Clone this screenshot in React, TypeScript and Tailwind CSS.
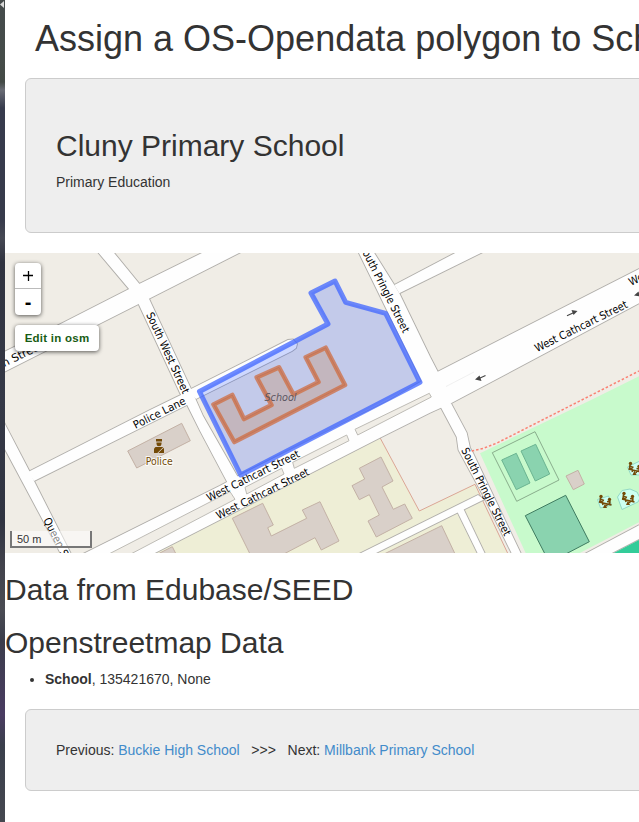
import React from 'react';

const ROADS = [
  '0,354 60,324.3 134,286.5 206,251 243,251 149,298.7 0,374',
  '97,251 112.5,251 139.3,283.7 149,298.7 190.7,388.3 203,416 236,474 247,492 235,497 227,481.7 200,430.7 186.7,404 180,393 138.3,303.3 129.3,289.3',
  '28,472 150,410 186,392.5 192,402.5 34,481',
  '188,390.5 288,340 293,339.5 297,344 296,348 292,351 196,399',
  '0,414 5,424.3 29.3,471 34,481 72,556 62,556 5,449.3 0,440',
  '79,556 220,485.7 240,475 390,400 437.7,371.7 645,266 645,300 451,403.3 430,412.7 380,437.7 200,530 149,556',
  '358,251 373,251 394.3,285 399.3,293.3 430,356.7 440,376 425,388',
  '394.3,285 459,251 485,251 399.3,293.3',
  '437,400 451,403.3 466.7,432.7 470,448 473,453 522,556 513,556 484,497 458.5,450 456.7,437',
  '355,556 478,495 484,499.5 370,556',
  '457,511 463,508 486,556 479,556',
  '581,556 645,522 645,536 606,556',
];

const ISLANDS = [
  '230,491.7 235,499.3 127,556 105,556',
  '245,487.3 281.7,468.3 284,474 246.7,494',
  '292.7,462.3 346.7,435 349,440.7 294.3,468.3',
  '355,429.3 429.3,393.3 431.3,397 357.7,435',
];

const BUILDINGS = [
  '127.7,451 181.7,423.3 190.3,440.7 136.7,468',
  '232.3,518.3 262.7,503.3 273.3,525 267.7,527.7 271.3,536 306.7,518.3 302.3,510 320,501.7 339,541 321.3,550 315,537.7 280,556 251,556',
  '359.3,468.3 381,457 393,481 382,487 393.3,509.3 404.7,504 412.3,518.3 376.3,537 368,521 379.3,515 369.3,494.7 359.3,499.7 352,485.7 364.7,479',
  '380,556 441.7,525.7 456,556',
  '154,556 172.3,546.7 177,556',
  '566,476 578,470.3 584.3,484 573.3,489.7',
];

const SITE = '311,293 335,281 345.7,302.3 385.7,313.3 420,382.3 240.7,475 199.5,391.5 328,324';
const SCHOOL =
  '213.5,404.5 232.3,395 244,419 271.5,405 256.7,377.3 279,367.3 293.5,394.5 318.5,382 305.7,357.3 325.7,347.7 345,385 234.3,442';

type LabelProps = { x: number; y: number; angle: number; length?: number; children: string };

function StreetLabel({ x, y, angle, length, children }: LabelProps) {
  return (
    <text
      transform={`translate(${x} ${y}) rotate(${angle})`}
      textLength={length}
      lengthAdjust="spacingAndGlyphs"
      className="fill-black stroke-white/60 stroke-1 text-[11px] [paint-order:stroke]"
    >
      {children}
    </text>
  );
}

function Seesaw({ x, y }: { x: number; y: number }) {
  return (
    <g transform={`translate(${x} ${y})`} fill="#734a08">
      <circle cx="-4" cy="-4.5" r="1.7" />
      <circle cx="4.5" cy="-1.5" r="1.7" />
      <path
        d="M-4.5 -3 -5 0.5 -2.5 1 -2 4M4.8 0 4.8 3 2.2 3 1.5 5M-6 1 6.5 4M-4 -1.5 -1 -0.5M4.5 1 2 0.5"
        fill="none"
        stroke="#734a08"
        strokeWidth="1.6"
      />
      <path d="M-2 7 0 2.5 2 7Z" />
    </g>
  );
}

function StreetMap() {
  return (
    <svg
      viewBox="5 253 634 300"
      className="block h-[300px] w-[634px] bg-[#f0ede6] font-['DejaVu_Sans',sans-serif]"
    >
      <polygon points="149,556 200,530 380,437.7 419.3,511 475,484.3 509,556" fill="#eeeed6" />
      <polygon points="480,453.3 590,400.5 645,373.3 645,519 574,556 527,556" fill="#c8facc" />
      <polyline
        points="380,437.7 419.3,511 475,484.3 509,556"
        fill="none"
        stroke="#dba595"
        strokeWidth="1"
      />

      <g fill="#b0aeaa" stroke="#b0aeaa" strokeWidth="1.8">
        {ROADS.map((p) => (
          <polygon key={p} points={p} />
        ))}
      </g>
      <g fill="#fefefe">
        {ROADS.map((p) => (
          <polygon key={p} points={p} />
        ))}
      </g>
      <g fill="#f0ede6" stroke="#bebcb6" strokeWidth="1">
        {ISLANDS.map((p) => (
          <polygon key={p} points={p} />
        ))}
      </g>
      <polygon points="608,556 645,537 645,556" fill="#33cc99" />

      <g fill="#d9d0c9" stroke="#c3b1a5" strokeWidth="1">
        {BUILDINGS.map((p) => (
          <polygon key={p} points={p} />
        ))}
        <polygon points={SCHOOL} fill="#eee8d1" />
      </g>

      <polyline
        points="471.7,451 483,448.5 497,443 581.7,400 639,371"
        fill="none"
        stroke="#fa8072"
        strokeWidth="1.5"
        strokeDasharray="2.5 2"
      />

      <polygon
        points="492.3,452.7 535,431.7 559,480 516.7,501.3"
        fill="none"
        stroke="#89ad8c"
        strokeWidth="1"
      />
      <g fill="#8ad3af" stroke="#6bb491" strokeWidth="1">
        <polygon points="501.7,460 516.3,453.3 530,483 516.3,489.7" />
        <polygon points="521,451 535.7,444.3 549.7,474 535.3,481" />
        <polygon points="525.3,515.7 565.7,495.3 589.3,541.7 562,556 546,556" stroke="#3f7b60" />
      </g>
      <g fill="#ccfff1" stroke="#94d9c5" strokeWidth="1">
        <polygon points="597.5,499.5 608.5,496 611.5,505 600.5,508" />
        <polygon points="617.5,497 622,490.5 630,489 637,492 640,498 638,502 622,509.5" />
        <polygon points="627.5,467 642,460 645,475 631,475" />
      </g>
      <Seesaw x={605} y={501} />
      <Seesaw x={628} y={498} />
      <Seesaw x={634.5} y={468} />

      <g stroke="#444" strokeWidth="1.1" fill="#444">
        <path d="M567 315.8 574 312.4" />
        <path d="M571.5 310 577.5 311 573.5 315Z" stroke="none" />
        <path d="M485.5 375.5 479 378.5" />
        <path d="M481.5 381 475 379.5 479.5 375.5Z" stroke="none" />
        <path d="M634 295.5 638.5 291.5 640 296.5Z" stroke="none" />
      </g>
      <path d="M446 386.5 474 372" stroke="#ececec" strokeWidth="0.8" />

      <g fill="#734a08">
        <path d="M156 439h6v2.5h-6z" />
        <path d="M156.5 442.5h5v1.5a2.5 2.2 0 0 1-5 0z" />
        <path d="M154 453v-4.5l1.5-1.5h7l1.5 1.5v4.5z" />
        <path d="M157.5 453.3 163.5 447.3" stroke="#d9d0c9" strokeWidth="1" />
      </g>
      <text
        x="145.8"
        y="465"
        textLength="27"
        lengthAdjust="spacingAndGlyphs"
        className="fill-[#734a08] stroke-white/80 stroke-2 text-[10px] [paint-order:stroke]"
      >
        Police
      </text>

      <StreetLabel x={0.5} y={369} angle={-26} length={48}>th Street</StreetLabel>
      <StreetLabel x={146} y={314.5} angle={65.2} length={88}>South West Street</StreetLabel>
      <StreetLabel x={135.5} y={429} angle={-26.5} length={57}>Police Lane</StreetLabel>
      <StreetLabel x={43} y={520} angle={63} length={66}>Queen Street</StreetLabel>
      <StreetLabel x={209} y={501.7} angle={-26.2} length={102}>West Cathcart Street</StreetLabel>
      <StreetLabel x={218.5} y={519.5} angle={-26.2} length={102}>West Cathcart Street</StreetLabel>
      <StreetLabel x={537} y={352.3} angle={-26.3} length={102}>West Cathcart Street</StreetLabel>
      <StreetLabel x={631} y={286} angle={-26.3} length={102}>West Cathcart Street</StreetLabel>
      <StreetLabel x={359.5} y={247} angle={63.2} length={97}>South Pringle Street</StreetLabel>
      <StreetLabel x={461} y={450} angle={63.4} length={97}>South Pringle Street</StreetLabel>

      <g strokeLinejoin="round">
        <polygon points={SITE} fill="#0033ff" fillOpacity="0.19" />
        <polygon points={SITE} fill="none" stroke="#4166ff" strokeOpacity="0.76" strokeWidth="5" />
        <polygon
          points={SCHOOL}
          fill="#cc6633"
          fillOpacity="0.16"
          stroke="#d0693a"
          strokeOpacity="0.72"
          strokeWidth="4.6"
        />
      </g>
      <text
        x="264.5"
        y="401"
        textLength="32"
        lengthAdjust="spacingAndGlyphs"
        className="fill-[#5c5763] text-[10px] italic"
      >
        School
      </text>
    </svg>
  );
}

function MapPanel() {
  return (
    <div className="relative mt-5 h-[300px] w-[634px] overflow-hidden">
      <StreetMap />
      <div className="absolute left-[10px] top-[10px] w-[26px] overflow-hidden rounded bg-white text-center font-['Liberation_Sans',sans-serif] text-black shadow-[0_1px_4px_rgba(0,0,0,0.65)]">
        <div className="flex h-[26px] items-center justify-center border-b border-[#bbb] text-[18px]">
          <svg viewBox="0 0 12 12" className="size-3">
            <path d="M6.5 1v10M1 5.5h10" stroke="black" strokeWidth="1.3" />
          </svg>
        </div>
        <div className="h-[26px] text-[20px] font-bold leading-[26px]">-</div>
      </div>
      <div className="absolute left-[10px] top-[72px] flex h-[26px] w-[84px] items-center justify-center rounded bg-white font-['Liberation_Sans',sans-serif] text-[11.5px] font-bold tracking-[0.25px] text-[#185c14] shadow-[0_1px_4px_rgba(0,0,0,0.65)]">
        Edit in osm
      </div>
      <div className="absolute left-[5px] top-[278px] h-[17px] w-[82px] border-2 border-t-0 border-[#777] bg-white/50 pl-[5px] font-['Liberation_Sans',sans-serif] text-[11px] leading-[16px] text-[#333]">
        50 m
      </div>
    </div>
  );
}

export default function App() {
  return (
    <div className="flex h-[822px] w-[639px] overflow-hidden bg-white font-['Liberation_Sans',Arial,sans-serif] text-sm leading-5 text-[#333]">
      <div className="w-[5px] shrink-0 bg-[linear-gradient(#454b4c_0px,#454c49_60px,#434a46_82px,#686b74_90px,#373b4d_108px,#373b4b_220px,#454853_238px,#30333f_262px,#353947_400px,#303441_520px,#42434c_565px,#4a4b53_610px,#3b3d4b_640px,#4a3c62_715px,#3a3f4c_745px,#454850_822px)]">
        <svg viewBox="0 0 5 9" className="block h-[9px] w-[5px]">
          <path d="M4 1v7L0 4.5Z" fill="#d8d8d8" />
        </svg>
      </div>
      <main className="w-[634px] shrink-0 overflow-hidden">
        <h1 className="mb-[19px] ml-[30px] mt-[19px] h-[40px] whitespace-nowrap text-[36px] leading-[40px]">
          Assign a OS-Opendata polygon to School
        </h1>
        <section className="ml-5 h-[155px] w-[700px] rounded-md border border-[#ccc] bg-[#eee] p-[30px]">
          <h2 className="mb-[10px] mt-5 text-[30px] leading-[33px]">Cluny Primary School</h2>
          <p>Primary Education</p>
        </section>
        <MapPanel />
        <h2 className="mt-5 text-[30px] leading-[33px]">Data from Edubase/SEED</h2>
        <h2 className="mb-[10px] mt-5 text-[30px] leading-[33px]">Openstreetmap Data</h2>
        <ul className="mb-5 list-disc pl-10">
          <li>
            <b>School</b>, 135421670, None
          </li>
        </ul>
        <section className="ml-5 w-[700px] whitespace-pre rounded-md border border-[#ccc] bg-[#eee] p-[30px]">
          Previous: <a className="text-[#428bca]">Buckie High School</a>
          {'   >>>   '}Next: <a className="text-[#428bca]">Millbank Primary School</a>
        </section>
      </main>
    </div>
  );
}
